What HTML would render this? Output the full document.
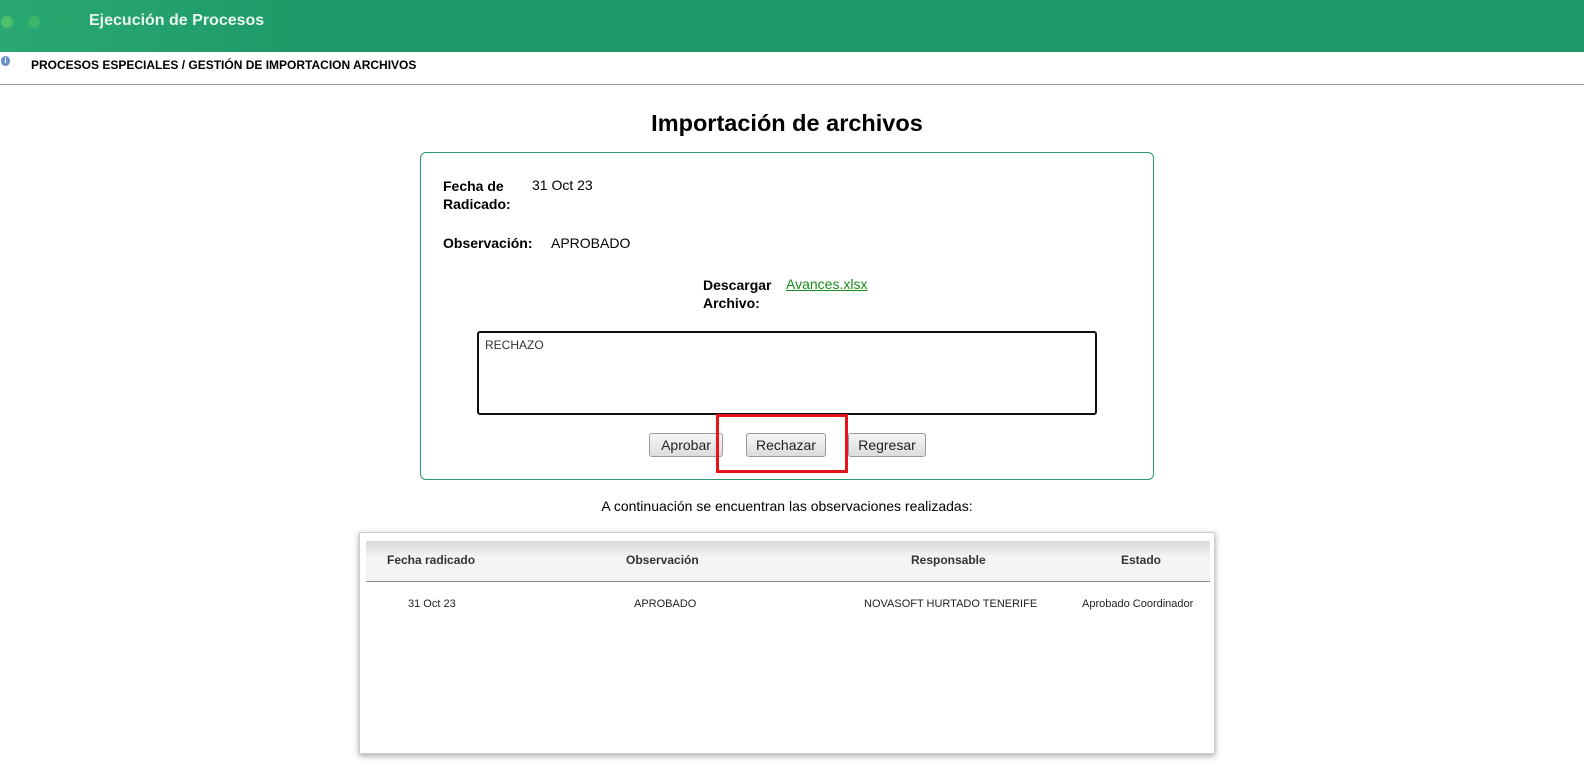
<!DOCTYPE html>
<html><head><meta charset="utf-8"><style>
*{box-sizing:border-box}
body{margin:0;width:1584px;height:777px;background:#fff;font-family:"Liberation Sans",sans-serif;color:#000;position:relative;overflow:hidden}
.a{position:absolute}
.hdr{left:0;top:0;width:1584px;height:52px;background:linear-gradient(90deg,#2aa872 0,#1e9a6a 300px,#1e9a6a 100%)}
.dot{width:12px;height:12px;border-radius:6px;top:16px}
.b{font-weight:bold}
.btn{height:24px;border:1px solid #9a9a9a;border-radius:3px;background:linear-gradient(#f6f6f6,#dcdcdc);font-size:14px;text-align:center;line-height:22px;color:#222}
</style></head><body>
<div class="a hdr"></div>
<div class="a dot" style="left:1px;background:#4fbf6a"></div>
<div class="a dot" style="left:28px;background:#3cb46a"></div>
<div class="a dot" style="left:56px;background:#2aa56c"></div>
<div class="a b" style="left:89px;top:12px;font-size:16px;color:#eaf7ef">Ejecución de Procesos</div>
<div class="a" style="left:1px;top:56px;width:9px;height:10px;border-radius:5px;background:#6a8fc8;color:#fff;font-size:8px;line-height:10px;text-align:center;font-weight:bold">i</div>
<div class="a b" style="left:31px;top:58px;font-size:12px">PROCESOS ESPECIALES / GESTIÓN DE IMPORTACION ARCHIVOS</div>
<div class="a" style="left:0;top:84px;width:1584px;height:1px;background:#999"></div>
<div class="a b" style="left:0;width:1574px;top:110px;font-size:23.5px;text-align:center">Importación de archivos</div>
<div class="a" style="left:420px;top:152px;width:734px;height:328px;border:1px solid #2a9a73;border-radius:6px"></div>
<div class="a b" style="left:443px;top:177px;font-size:14px;line-height:18px">Fecha de<br>Radicado:</div>
<div class="a" style="left:532px;top:177px;font-size:14px">31 Oct 23</div>
<div class="a b" style="left:443px;top:235px;font-size:14px">Observación:</div>
<div class="a" style="left:551px;top:235px;font-size:14px">APROBADO</div>
<div class="a b" style="left:703px;top:276px;font-size:14px;line-height:18px">Descargar<br>Archivo:</div>
<div class="a" style="left:786px;top:276px;font-size:14px;color:#1a8a1a;text-decoration:underline">Avances.xlsx</div>
<div class="a" style="left:477px;top:331px;width:620px;height:84px;border:2px solid #111;border-radius:3px;font-size:12px;padding:5px 6px;color:#333">RECHAZO</div>
<div class="a btn" style="left:649px;top:433px;width:74px">Aprobar</div>
<div class="a btn" style="left:746px;top:433px;width:80px">Rechazar</div>
<div class="a btn" style="left:848px;top:433px;width:78px">Regresar</div>
<div class="a" style="left:716px;top:414px;width:132px;height:59px;border:3px solid #e8121a"></div>
<div class="a" style="left:0;width:1574px;top:498px;font-size:14px;text-align:center">A continuación se encuentran las observaciones realizadas:</div>
<div class="a" style="left:359px;top:532px;width:856px;height:222px;border:1px solid #ccc;box-shadow:0 2px 6px rgba(0,0,0,.35);background:#fff"></div>
<div class="a" style="left:366px;top:541px;width:844px;height:41px;background:linear-gradient(#d8d8d8,#f4f4f4 40%,#f4f4f4);border-bottom:1px solid #888"></div>
<div class="a b" style="left:387px;top:553px;font-size:12px;color:#333">Fecha radicado</div>
<div class="a b" style="left:626px;top:553px;font-size:12px;color:#333">Observación</div>
<div class="a b" style="left:911px;top:553px;font-size:12px;color:#333">Responsable</div>
<div class="a b" style="left:1121px;top:553px;font-size:12px;color:#333">Estado</div>
<div class="a" style="left:408px;top:598px;font-size:11px;color:#222">31 Oct 23</div>
<div class="a" style="left:634px;top:598px;font-size:11px;color:#222">APROBADO</div>
<div class="a" style="left:864px;top:598px;font-size:11px;color:#222">NOVASOFT HURTADO TENERIFE</div>
<div class="a" style="left:1082px;top:598px;font-size:11px;color:#222">Aprobado Coordinador</div>
</body></html>
